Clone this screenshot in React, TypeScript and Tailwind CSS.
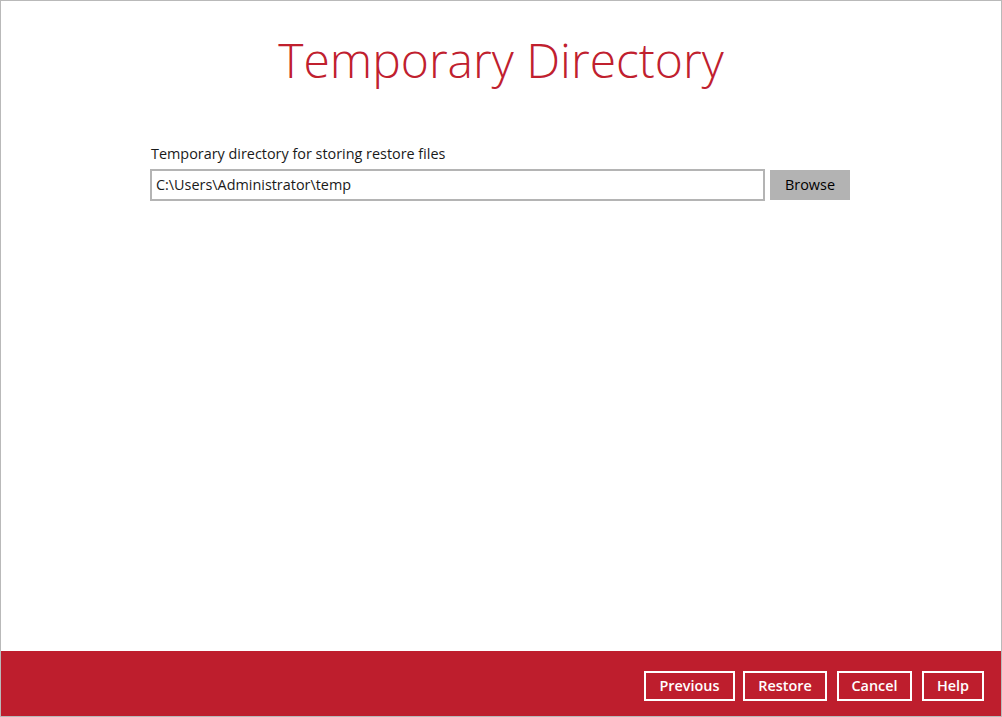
import React from "react";

export default function App() {
  const font = { fontFamily: '"Open Sans", "Noto Sans", sans-serif' };
  return (
    <div
      className="w-[1002px] h-[717px] border border-[#b9b9b9] bg-white flex flex-col"
      style={font}
    >
      <div className="flex-1 flex flex-col">
        <h1 className="text-center text-[48px] font-light text-[#c0202e] leading-none mt-[35px]">
          Temporary Directory
        </h1>
        <div className="w-[700px] ml-[149px] mt-[60px]">
          <div className="text-[14.4px] text-[#1a1a1a] pl-[1px] leading-[20px]">
            Temporary directory for storing restore files
          </div>
          <div className="flex items-center gap-[5px] mt-[5px]">
            <div className="flex-1 h-[32px] border-2 border-[#b4b4b4] flex items-center px-[4px] text-[14.4px] text-[#1a1a1a]">
              C:\Users\Administrator\temp
            </div>
            <button className="w-[80px] h-[30px] bg-[#b3b3b3] text-[14.4px] text-black flex items-center justify-center">
              Browse
            </button>
          </div>
        </div>
      </div>
      <div className="h-[65px] bg-[#be1e2d] flex items-start justify-end pt-[20px] pr-[17px]">
        <button className="w-[91px] h-[30px] border-2 border-white text-white text-[14.4px] font-semibold flex items-center justify-center">
          Previous
        </button>
        <button className="w-[84px] h-[30px] ml-[8px] border-2 border-white text-white text-[14.4px] font-semibold flex items-center justify-center">
          Restore
        </button>
        <button className="w-[75px] h-[30px] ml-[10px] border-2 border-white text-white text-[14.4px] font-semibold flex items-center justify-center">
          Cancel
        </button>
        <button className="w-[62px] h-[30px] ml-[10px] border-2 border-white text-white text-[14.4px] font-semibold flex items-center justify-center">
          Help
        </button>
      </div>
    </div>
  );
}
